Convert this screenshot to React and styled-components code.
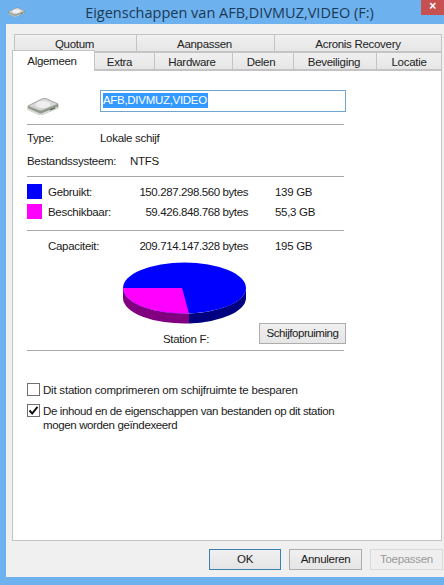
import styled, { createGlobalStyle } from 'styled-components';
import React from 'react';

const GlobalStyle = createGlobalStyle`
  html, body {
    margin: 0;
    padding: 0;
    background: #6db1ee;
  }
  #root {
    width: 444px;
    height: 585px;
    overflow: hidden;
  }
`;

const Window = styled.div`
  width: 444px;
  height: 585px;
  display: flex;
  flex-direction: column;
  background: #6db1ee;
  font-family: "Liberation Sans", Arial, sans-serif;
  font-size: 11.5px;
  letter-spacing: -0.3px;
  color: #1a1a1a;
  overflow: hidden;
`;

const TitleBar = styled.div`
  height: 24px;
  flex: none;
  display: flex;
  align-items: center;
  position: relative;
  padding-left: 8px;
`;

const Title = styled.div`
  flex: 1;
  text-align: center;
  font-family: "Open Sans", sans-serif;
  font-size: 14.5px;
  letter-spacing: 0;
  color: #1c3954;
  padding-right: 10px;
  padding-top: 1px;
  white-space: nowrap;
`;

const CloseButton = styled.div`
  position: absolute;
  top: 0;
  right: 0;
  width: 23px;
  height: 15px;
  background: #c75050;
  color: #fff;
  font-size: 12px;
  font-weight: 700;
  line-height: 13px;
  text-align: center;
`;

const Body = styled.div`
  height: 553px;
  flex: none;
  margin-left: 6px;
  background: #f0f0f0;
  padding: 10px 2px 0 6px;
  box-sizing: border-box;
  display: flex;
  flex-direction: column;
`;

const TabRow = styled.div`
  display: flex;
  height: 18px;
  padding-left: ${({ $back }) => ($back ? '2px' : '0')};
  flex: none;
`;

const Tab = styled.div`
  width: ${({ $width }) => $width}px;
  box-sizing: border-box;
  padding-right: ${({ $shift }) => $shift || 0}px;
  background: ${({ $active }) =>
    $active ? '#fff' : 'linear-gradient(#f0f0f0, #e6e6e6)'};
  border: 1px solid #c4c4c4;
  border-left-width: ${({ $active, $first }) => ($active || $first ? '1px' : '0')};
  border-bottom: ${({ $active }) => ($active ? '0' : '1px solid #c4c4c4')};
  text-align: center;
  color: #222;
  line-height: 18px;
  white-space: nowrap;
  position: relative;
  ${({ $active }) =>
    $active &&
    `
      height: 21px;
      margin-top: -2px;
      margin-bottom: -1px;
      z-index: 2;
      line-height: 20px;
    `}
`;

const Panel = styled.div`
  width: 430px;
  height: 471px;
  box-sizing: border-box;
  flex: none;
  background: #fff;
  border: 1px solid #c4c4c4;
  padding: 0 97px 0 14px;
  display: flex;
  flex-direction: column;
`;

const NameRow = styled.div`
  display: flex;
  align-items: flex-start;
  height: 53px;
  flex: none;
  box-sizing: border-box;
  padding-top: 19px;
  margin-right: -2px;
`;

const IconSlot = styled.div`
  width: 73px;
  flex: none;
  padding-top: 7px;
`;

const NameInput = styled.div`
  flex: 1;
  height: 22px;
  box-sizing: border-box;
  border: 1px solid #6fa5cf;
  padding: 2px 0 0 2px;
  line-height: 15px;
`;

const Selected = styled.span`
  background: #3399ff;
  color: #fff;
  display: inline-block;
  padding-right: 1px;
`;

const Divider = styled.div`
  height: 1px;
  flex: none;
  background: #a9a9a9;
`;

const InfoRow = styled.div`
  height: 23px;
  display: flex;
  align-items: center;
  flex: none;
  white-space: nowrap;
`;

const InfoLabel = styled.div`
  width: ${({ $width }) => $width}px;
`;

const InfoGroup = styled.div`
  padding: 1px 0 4px;
`;

const UsageGroup = styled.div`
  padding: 7px 0 11px;
  display: flex;
  flex-direction: column;
  gap: 5px;
`;

const UsageRow = styled.div`
  display: grid;
  grid-template-columns: 15px 6px 87px 113px 27px auto;
  height: 15px;
  align-items: center;
  white-space: nowrap;
`;

const Swatch = styled.div`
  width: 15px;
  height: 15px;
  background: ${({ $color }) => $color};
  grid-column: 1;
`;

const UsageLabel = styled.div`
  grid-column: 3;
`;

const Bytes = styled.div`
  grid-column: 4;
  text-align: right;
  letter-spacing: -0.4px;
`;

const Size = styled.div`
  grid-column: 6;
`;

const CapacityRow = styled(UsageRow)`
  margin-top: 7px;
`;

const PieSection = styled.div`
  display: flex;
  align-items: flex-end;
  padding-left: 96px;
  gap: 13px;
  height: 97px;
  flex: none;
  box-sizing: border-box;
  padding-bottom: 5px;
  margin-right: -2px;
`;

const PieColumn = styled.div`
  width: 123px;
  display: flex;
  flex-direction: column;
  align-items: center;
  gap: 7px;
  margin-bottom: -1px;
`;

const StationLabel = styled.div`
  line-height: 14px;
  padding-left: 3px;
`;

const CleanupButton = styled.div`
  width: 87px;
  height: 21px;
  box-sizing: border-box;
  border: 1px solid #adadad;
  background: linear-gradient(#f0f0f0, #e5e5e5);
  text-align: center;
  line-height: 19px;
  letter-spacing: -0.45px;
  margin-bottom: 1px;
`;

const Options = styled.div`
  padding-top: 32px;
  display: flex;
  flex-direction: column;
  gap: 7px;
  margin-right: -80px;
`;

const Option = styled.div`
  display: flex;
  gap: 3px;
  line-height: 14px;
  letter-spacing: ${({ $spacing }) => $spacing}px;
`;

const CheckBox = styled.div`
  width: 13px;
  height: 13px;
  box-sizing: border-box;
  flex: none;
  border: 1px solid #707070;
  background: #fff;
  display: flex;
  align-items: center;
  justify-content: center;
`;

const Footer = styled.div`
  display: flex;
  padding: 8px 0 0 197px;
  gap: 8px;
`;

const DialogButton = styled.div`
  width: ${({ $width }) => $width}px;
  height: 21px;
  flex: none;
  box-sizing: border-box;
  border: 1px solid ${({ $primary, $disabled }) =>
    $primary ? '#3c7fb1' : $disabled ? '#d9d9d9' : '#adadad'};
  background: ${({ $disabled }) =>
    $disabled ? '#efefef' : 'linear-gradient(#f0f0f0, #e5e5e5)'};
  color: ${({ $disabled }) => ($disabled ? '#9a9a9a' : '#1a1a1a')};
  text-align: center;
  line-height: 19px;
`;

const DriveIcon = ({ width, height }) => (
  <svg width={width} height={height} viewBox="0 0 32 18" style={{ display: 'block' }}>
    <path d="M1 9 L16 1.5 Q18 1 20 2 L31 7 L31 11 L15 17.5 Q13 18 11 17 L1 12.5 Z" fill="#8f9a8c" stroke="#7d7d7d" strokeWidth="0.6" />
    <path d="M1 12 L11 16.5 Q13 17.5 15 17 L31 10.5" fill="none" stroke="#d8ddd5" strokeWidth="1.5" />
    <path d="M1 9 L16 1.5 Q18 1 20 2 L31 7 L15 13.5 Q13 14 11 13 Z" fill="#d6d6d6" stroke="#9a9a9a" strokeWidth="0.5" />
    <ellipse cx="16" cy="7.5" rx="7.5" ry="3.5" fill="#efefef" />
    <path d="M23 13 L28 11" stroke="#4f5a4c" strokeWidth="1.1" />
  </svg>
);

const Pie = () => (
  <svg width="125" height="63" viewBox="0 0 125 63" style={{ display: 'block', flex: 'none' }}>
    <path d="M1 26 L1 36 A61.5 25.5 0 0 0 67 61.4 L67 51.4 A61.5 25.5 0 0 1 1 26 Z" fill="#800080" />
    <path d="M67 51.4 L67 61.4 A61.5 25.5 0 0 0 124 36 L124 26 A61.5 25.5 0 0 1 67 51.4 Z" fill="#000080" />
    <ellipse cx="62.5" cy="26" rx="61.5" ry="25.5" fill="#0000ff" />
    <path d="M60 26 L1 26 A61.5 25.5 0 0 0 67 51.4 Z" fill="#ff00ff" />
  </svg>
);

const Check = () => (
  <svg width="11" height="11" viewBox="0 0 11 11">
    <path d="M1.5 5.5 L4.2 8.5 L9.5 1.8" fill="none" stroke="#111" strokeWidth="2" />
  </svg>
);

const topTabs = [
  { label: 'Quotum', width: 123, first: true, shift: 2 },
  { label: 'Aanpassen', width: 138, shift: 2 },
  { label: 'Acronis Recovery', width: 167 },
];

const bottomTabs = [
  { label: 'Algemeen', width: 83, active: true, shift: 3 },
  { label: 'Extra', width: 60, shift: 10 },
  { label: 'Hardware', width: 78, shift: 3 },
  { label: 'Delen', width: 61, shift: 4 },
  { label: 'Beveiliging', width: 83, shift: 2 },
  { label: 'Locatie', width: 65 },
];

export default function App() {
  return (
    <>
      <GlobalStyle />
      <Window>
        <TitleBar>
          <DriveIcon width={17} height={10} />
          <Title>Eigenschappen van AFB,DIVMUZ,VIDEO (F:)</Title>
          <CloseButton>×</CloseButton>
        </TitleBar>
        <Body>
          <TabRow $back>
            {topTabs.map(tab => (
              <Tab key={tab.label} $width={tab.width} $first={tab.first} $shift={tab.shift}>
                {tab.label}
              </Tab>
            ))}
          </TabRow>
          <TabRow>
            {bottomTabs.map(tab => (
              <Tab key={tab.label} $width={tab.width} $active={tab.active} $shift={tab.shift}>
                {tab.label}
              </Tab>
            ))}
          </TabRow>
          <Panel>
            <NameRow>
              <IconSlot>
                <DriveIcon width={32} height={18} />
              </IconSlot>
              <NameInput>
                <Selected>AFB,DIVMUZ,VIDEO</Selected>
              </NameInput>
            </NameRow>
            <Divider />
            <InfoGroup>
              <InfoRow>
                <InfoLabel $width={73}>Type:</InfoLabel>
                Lokale schijf
              </InfoRow>
              <InfoRow>
                <InfoLabel $width={103}>Bestandssysteem:</InfoLabel>
                NTFS
              </InfoRow>
            </InfoGroup>
            <Divider />
            <UsageGroup>
              <UsageRow>
                <Swatch $color="#0000ff" />
                <UsageLabel>Gebruikt:</UsageLabel>
                <Bytes>150.287.298.560 bytes</Bytes>
                <Size>139 GB</Size>
              </UsageRow>
              <UsageRow>
                <Swatch $color="#ff00ff" />
                <UsageLabel>Beschikbaar:</UsageLabel>
                <Bytes>59.426.848.768 bytes</Bytes>
                <Size>55,3 GB</Size>
              </UsageRow>
            </UsageGroup>
            <Divider />
            <CapacityRow>
              <UsageLabel>Capaciteit:</UsageLabel>
              <Bytes>209.714.147.328 bytes</Bytes>
              <Size>195 GB</Size>
            </CapacityRow>
            <PieSection>
              <PieColumn>
                <Pie />
                <StationLabel>Station F:</StationLabel>
              </PieColumn>
              <CleanupButton>Schijfopruiming</CleanupButton>
            </PieSection>
            <Divider />
            <Options>
              <Option $spacing={-0.22}>
                <CheckBox />
                Dit station comprimeren om schijfruimte te besparen
              </Option>
              <Option $spacing={-0.37}>
                <CheckBox>
                  <Check />
                </CheckBox>
                <span>
                  De inhoud en de eigenschappen van bestanden op dit station
                  <br />
                  mogen worden geïndexeerd
                </span>
              </Option>
            </Options>
          </Panel>
          <Footer>
            <DialogButton $width={72} $primary>OK</DialogButton>
            <DialogButton $width={73}>Annuleren</DialogButton>
            <DialogButton $width={73} $disabled>Toepassen</DialogButton>
          </Footer>
        </Body>
      </Window>
    </>
  );
}
